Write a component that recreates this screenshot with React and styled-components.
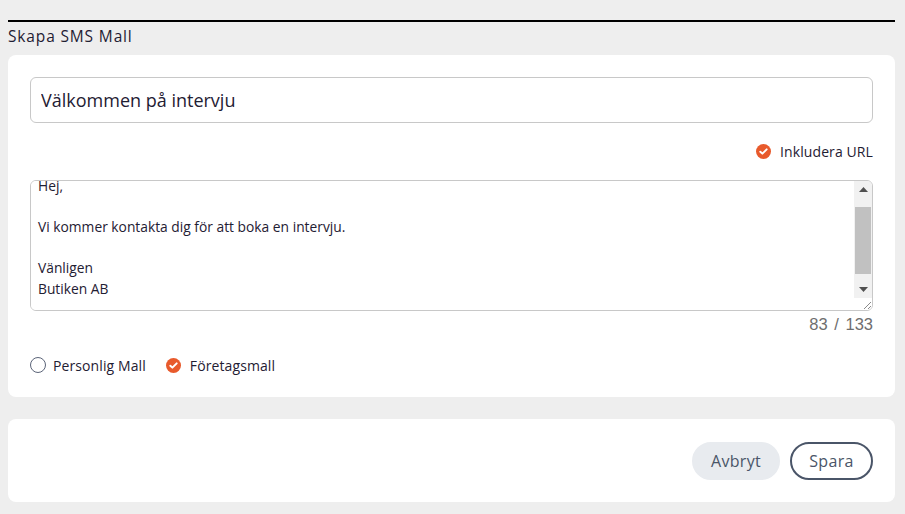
import React, { useEffect, useRef } from "react";
import styled, { createGlobalStyle } from "styled-components";

const GlobalStyle = createGlobalStyle`
  html, body {
    margin: 0;
    padding: 0;
    background: #eeeeee;
    font-family: "Open Sans", "Liberation Sans", sans-serif;
    color: #1f2033;
  }
  * { box-sizing: border-box; }
`;

const Page = styled.div`
  padding: 20px 10px 12px 8px;
  display: flex;
  flex-direction: column;
`;

const Header = styled.h1`
  margin: 0;
  border-top: 2px solid #000;
  padding-top: 4px;
  font-size: 15.5px;
  font-weight: 400;
  letter-spacing: 0.85px;
  line-height: 20px;
  color: #1f2033;
`;

const Card = styled.section`
  background: #fff;
  border-radius: 8px;
  margin-top: ${(p) => p.$gap}px;
  padding: ${(p) => p.$pad};
  display: flex;
  flex-direction: column;
`;

const TitleInput = styled.input`
  width: 100%;
  height: 46px;
  border: 1px solid #c8c8c8;
  border-radius: 6px;
  padding: 0 10px;
  font-family: inherit;
  font-size: 18px;
  color: #1f2033;
  outline: none;
`;

const OptionRow = styled.div`
  display: flex;
  justify-content: ${(p) => p.$align};
  align-items: center;
  height: 20px;
  gap: 20px;
  margin-top: ${(p) => p.$top}px;
`;

const Option = styled.label`
  display: flex;
  align-items: center;
  gap: ${(p) => p.$gap || 9}px;
  font-size: 14px;
  letter-spacing: 0.1px;
  color: #1f2033;
`;

const RadioCircle = styled.span`
  width: 16px;
  height: 16px;
  border-radius: 50%;
  border: 1.5px solid #5b6478;
  display: inline-block;
`;

const MessageFrame = styled.div`
  display: flex;
  height: 131px;
  margin-top: 19px;
  border: 1px solid #c8c8c8;
  border-radius: 6px;
  overflow: hidden;
`;

const MessageBox = styled.textarea`
  flex: 1;
  display: block;
  border: none;
  padding: 7px;
  font-family: inherit;
  font-size: 13.8px;
  line-height: 20.5px;
  color: #1f2033;
  resize: none;
  outline: none;
  overflow: hidden;
`;

const ScrollColumn = styled.div`
  width: 18px;
  display: flex;
  flex-direction: column;
`;

const ScrollBar = styled.div`
  height: 117px;
  background: #f1f1f1;
  display: flex;
  flex-direction: column;
`;

const ArrowButton = styled.div`
  height: 17px;
  display: flex;
  align-items: center;
  justify-content: center;
`;

const Track = styled.div`
  flex: 1;
  padding: 9px 1px 7px;
  display: flex;
`;

const Thumb = styled.div`
  flex: 1;
  background: #c1c1c1;
`;

const ResizeCorner = styled.div`
  flex: 1;
  display: flex;
  align-items: flex-end;
  justify-content: flex-end;
  background: #fff;
`;

const Counter = styled.div`
  text-align: right;
  font-family: "Liberation Sans", Arial, sans-serif;
  font-size: 16.5px;
  word-spacing: 2px;
  line-height: 20px;
  color: #6e6e6e;
  margin-top: 3px;
`;

const Actions = styled.div`
  display: flex;
  justify-content: flex-end;
  gap: 10px;
`;

const Button = styled.button`
  height: 38px;
  width: ${(p) => (p.$outline ? 83 : 88)}px;
  padding: 0;
  border-radius: 19px;
  font-family: inherit;
  font-size: 16px;
  font-weight: 500;
  letter-spacing: 0.3px;
  color: #4a5568;
  background: ${(p) => (p.$outline ? "#fff" : "#e8ebef")};
  border: 2px solid ${(p) => (p.$outline ? "#4a5568" : "#e8ebef")};
  cursor: pointer;
`;

const CheckIcon = () => (
  <svg width="15" height="15" viewBox="0 0 16 16">
    <circle cx="8" cy="8" r="8" fill="#e85a2c" />
    <path d="M4.6 8.2l2.2 2.1 4.6-4.6" fill="none" stroke="#fff" strokeWidth="2.1" strokeLinecap="round" strokeLinejoin="round" />
  </svg>
);

const Arrow = ({ down }) => (
  <svg width="9" height="5" viewBox="0 0 9 5">
    <path d={down ? "M0 0L4.5 5L9 0z" : "M0 5L4.5 0L9 5z"} fill="#505050" />
  </svg>
);

const Grip = () => (
  <svg width="10" height="10" viewBox="0 0 10 10">
    <path d="M9 2L2 9M9 6L6 9" stroke="#8a8a8a" strokeWidth="1" />
  </svg>
);

const message =
  "Hej,\n\nVi kommer kontakta dig för att boka en intervju.\n\nVänligen\nButiken AB\n";

export default function App() {
  const boxRef = useRef(null);
  useEffect(() => {
    if (boxRef.current) boxRef.current.scrollTop = 12;
  }, []);

  return (
    <Page>
      <GlobalStyle />
      <Header>Skapa SMS Mall</Header>
      <Card $gap={9} $pad="22px 22px 22px 22px">
        <TitleInput defaultValue="Välkommen på intervju" />
        <OptionRow $align="flex-end" $top={18}>
          <Option>
            <CheckIcon />
            Inkludera URL
          </Option>
        </OptionRow>
        <MessageFrame>
          <MessageBox ref={boxRef} defaultValue={message} />
          <ScrollColumn>
            <ScrollBar>
              <ArrowButton>
                <Arrow />
              </ArrowButton>
              <Track>
                <Thumb />
              </Track>
              <ArrowButton>
                <Arrow down />
              </ArrowButton>
            </ScrollBar>
            <ResizeCorner>
              <Grip />
            </ResizeCorner>
          </ScrollColumn>
        </MessageFrame>
        <Counter>83 / 133</Counter>
        <OptionRow $align="flex-start" $top={21}>
          <Option $gap={7}>
            <RadioCircle />
            Personlig Mall
          </Option>
          <Option>
            <CheckIcon />
            Företagsmall
          </Option>
        </OptionRow>
      </Card>
      <Card $gap={22} $pad="23px 22px 22px 22px">
        <Actions>
          <Button>Avbryt</Button>
          <Button $outline>Spara</Button>
        </Actions>
      </Card>
    </Page>
  );
}
